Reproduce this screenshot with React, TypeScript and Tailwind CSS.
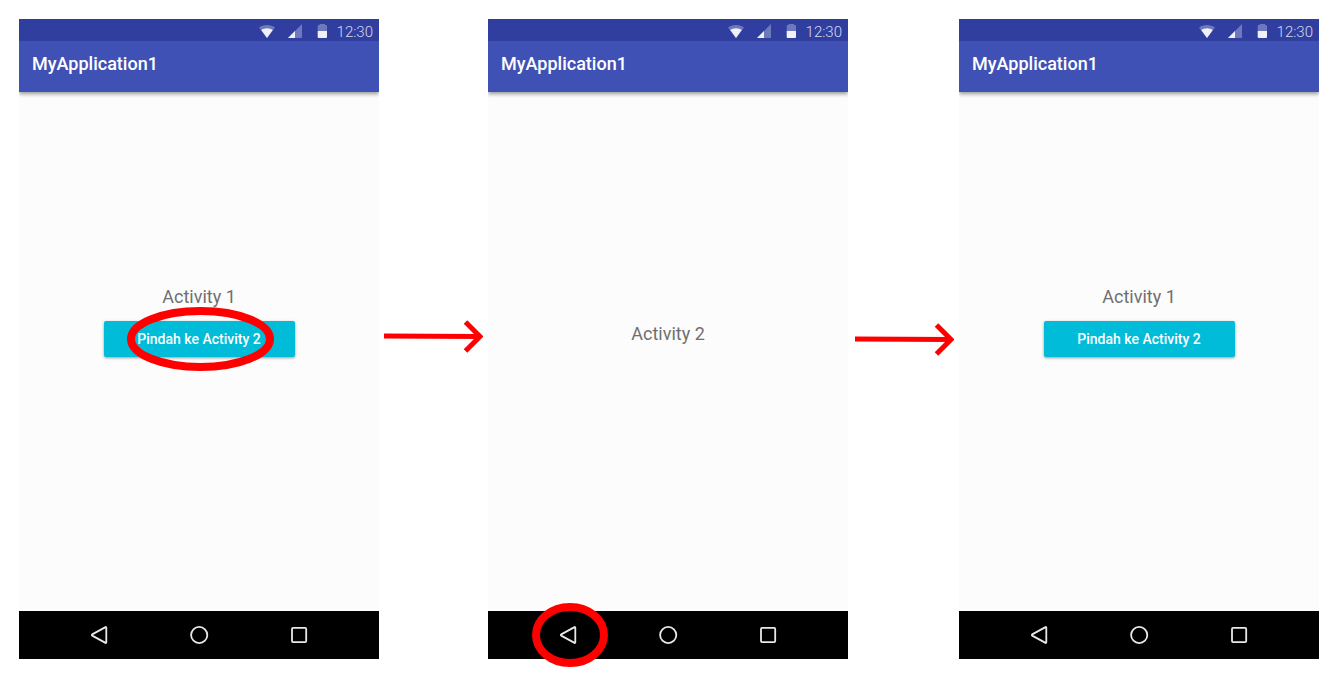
import type { ReactNode } from "react";

function StatusBar() {
  return (
    <div className="flex h-[22px] items-center justify-end bg-[#303f9f] pr-1.5">
      <svg className="mt-0.5 mr-3 h-4 w-4" viewBox="0 0 16 16" aria-label="Wi-Fi">
        <path d="M0 4.6C2 2.9 4.8 2 8 2s6 .9 8 2.6L8 15z" fill="#fff" fillOpacity=".3" />
        <path d="M2.2 7.1C3.8 5.900 5.800 5.200 8 5.200s4.200.7 5.800 1.900L8 15z" fill="#f0f1f8" />
      </svg>
      <svg className="mt-0.5 mr-3 h-4 w-4" viewBox="0 0 16 16" aria-label="Signal">
        <path d="M1 15L15 1v14z" fill="#fff" fillOpacity=".3" />
        <path d="M1 15L8 8v7z" fill="#f0f1f8" />
      </svg>
      <svg className="mt-0.5 mr-1.5 h-4 w-4" viewBox="0 0 16 16" aria-label="Battery">
        <path d="M2.700 8V3q0-1 1-1h1V1h5.300v1h1q1 0 1 1v5z" fill="#fff" fillOpacity=".3" />
        <path d="M2.700 8H12v6q0 1-1 1H3.700q-1 0-1-1z" fill="#f0f1f8" />
      </svg>
      <span className="mt-1 text-[15px] leading-5 font-light text-[#d6d9ec]">12:30</span>
    </div>
  );
}

function NavBar({ ringed }: { ringed?: boolean }) {
  return (
    <nav className="flex h-12 items-center justify-center gap-[76px] bg-black">
      <button type="button" aria-label="Back" className="relative h-6 w-6">
        <svg className="h-6 w-6" viewBox="0 0 24 24" fill="none" stroke="#e8e8e8" strokeWidth="1.8" strokeLinejoin="round">
          <path d="M5.200 11.400Q4.500 12 5.200 12.600L18.500 19.900Q19.300 20.200 19.300 19.300V4.700Q19.300 3.800 18.500 4.100z" />
        </svg>
        {ringed && (
          <svg className="pointer-events-none absolute -top-5 -left-6 h-16 w-[76px] max-w-none" viewBox="0 0 76 64" fill="none" stroke="#f00" strokeWidth="8">
            <ellipse cx="38" cy="32" rx="34" ry="28" />
          </svg>
        )}
      </button>
      <button type="button" aria-label="Home" className="h-6 w-6">
        <svg className="h-6 w-6" viewBox="0 0 24 24" fill="none" stroke="#e8e8e8" strokeWidth="1.8">
          <circle cx="12.200" cy="12" r="8.100" />
        </svg>
      </button>
      <button type="button" aria-label="Recent apps" className="h-6 w-6">
        <svg className="h-6 w-6" viewBox="0 0 24 24" fill="none" stroke="#e8e8e8" strokeWidth="1.8">
          <rect x="5" y="4.900" width="14.200" height="14.200" rx="1" />
        </svg>
      </button>
    </nav>
  );
}

function Phone({ children, ringedBack }: { children: ReactNode; ringedBack?: boolean }) {
  return (
    <section className="flex min-h-[640px] w-[360px] shrink-0 flex-col bg-[#fcfcfc]">
      <StatusBar />
      <header className="relative flex h-[51px] items-center bg-[#3f51b5] px-[13px] pb-1.5 shadow-[0_2px_4px_rgba(0,0,0,0.4)] [clip-path:inset(0_0_-8px_0)]">
        <h1 className="text-lg leading-6 font-medium text-white">MyApplication1</h1>
      </header>
      <div className="flex grow flex-col items-center">{children}</div>
      <NavBar ringed={ringedBack} />
    </section>
  );
}

function FirstActivity({ ringed }: { ringed?: boolean }) {
  return (
    <div className="flex flex-col items-center gap-3 pt-[193px]">
      <p className="text-lg leading-6 text-[#6f6f6f]">Activity 1</p>
      <div className="relative">
        <button type="button" className="block h-9 w-[191px] rounded-xs bg-[#00bcd8] text-sm font-medium text-white shadow-[0_1px_3px_rgba(0,0,0,0.4)]">
          Pindah ke Activity 2
        </button>
        {ringed && (
          <svg className="pointer-events-none absolute -top-3.5 left-[23px] h-16 w-[147px] max-w-none" viewBox="0 0 147 64" fill="none" stroke="#f00" strokeWidth="8">
            <ellipse cx="73.500" cy="32" rx="69.500" ry="28" />
          </svg>
        )}
      </div>
    </div>
  );
}

function Arrow({ className }: { className: string }) {
  return (
    <svg className={"h-[34px] w-[99px] shrink-0 " + className} viewBox="0 0 99 34" fill="none" stroke="#f00" strokeWidth="5" aria-hidden="true">
      <path d="M0 16L96 16.500" />
      <path d="M81.500 2L96 16.500L81.500 31" />
    </svg>
  );
}

export default function App() {
  return (
    <main className="flex min-h-screen items-start justify-center bg-white pt-[19px] pr-5 pb-5 pl-[19px] font-[Roboto,sans-serif]">
      <Phone>
        <FirstActivity ringed />
      </Phone>
      <Arrow className="mt-[301px] mr-[5px] ml-[5px]" />
      <Phone ringedBack>
        <p className="pt-[230px] text-lg leading-6 text-[#6f6f6f]">Activity 2</p>
      </Phone>
      <Arrow className="mt-[304px] mr-[5px] ml-[7px]" />
      <Phone>
        <FirstActivity />
      </Phone>
    </main>
  );
}
